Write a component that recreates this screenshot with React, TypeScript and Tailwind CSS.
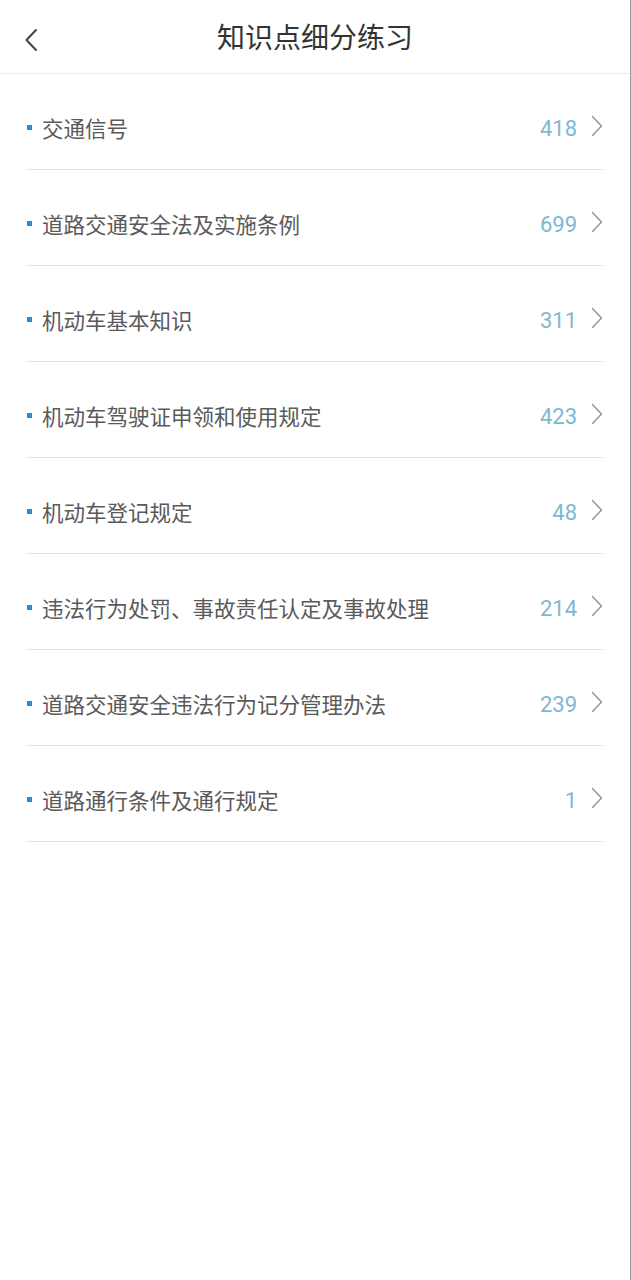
const items = [
  { name: "交通信号", count: 418 },
  { name: "道路交通安全法及实施条例", count: 699 },
  { name: "机动车基本知识", count: 311 },
  { name: "机动车驾驶证申领和使用规定", count: 423 },
  { name: "机动车登记规定", count: 48 },
  { name: "违法行为处罚、事故责任认定及事故处理", count: 214 },
  { name: "道路交通安全违法行为记分管理办法", count: 239 },
  { name: "道路通行条件及通行规定", count: 1 },
];

export default function App() {
  return (
    <div
      className="h-[1280px] w-full bg-white border-r border-[#999]"
      style={{ fontFamily: '"Noto Sans CJK SC", "Noto Sans", sans-serif' }}
    >
      <div className="relative h-[74px] border-b border-[#ececec] flex items-center justify-center">
        <button className="absolute left-[20px] top-[24px] p-1">
          <svg width="14" height="24" viewBox="0 0 14 24" fill="none">
            <path d="M12 2 L2.5 12 L12 22" stroke="#444" strokeWidth="2" strokeLinecap="round" strokeLinejoin="round" />
          </svg>
        </button>
        <h1 className="text-[28px] leading-[36px] text-[#333] font-normal -mt-[2px]">知识点细分练习</h1>
      </div>

      <div>
        {items.map((item) => (
          <div
            key={item.name}
            className="mx-[27px] h-[96px] border-b border-[#e3e3e3] flex items-start pt-[42px]"
          >
            <div className="flex items-center h-[24px] flex-1">
              <span className="shrink-0 w-[5px] h-[5px] bg-[#1a8ee0] mr-[10px] -mt-[2px]"></span>
              <span className="text-[21.5px] leading-[24px] text-[#5a5a5a]">{item.name}</span>
              <span
                className="ml-auto text-[22px] leading-[24px] text-[#7db8d3] mt-[2px]"
                style={{ fontFamily: "Roboto, sans-serif" }}
              >
                {item.count}
              </span>
              <svg className="shrink-0 ml-[14px] -mt-[4px]" width="12" height="22" viewBox="0 0 12 22" fill="none">
                <path d="M1.5 1.5 L10.5 11 L1.5 20.5" stroke="#999" strokeWidth="1.6" strokeLinecap="round" strokeLinejoin="round" />
              </svg>
            </div>
          </div>
        ))}
      </div>
    </div>
  );
}
